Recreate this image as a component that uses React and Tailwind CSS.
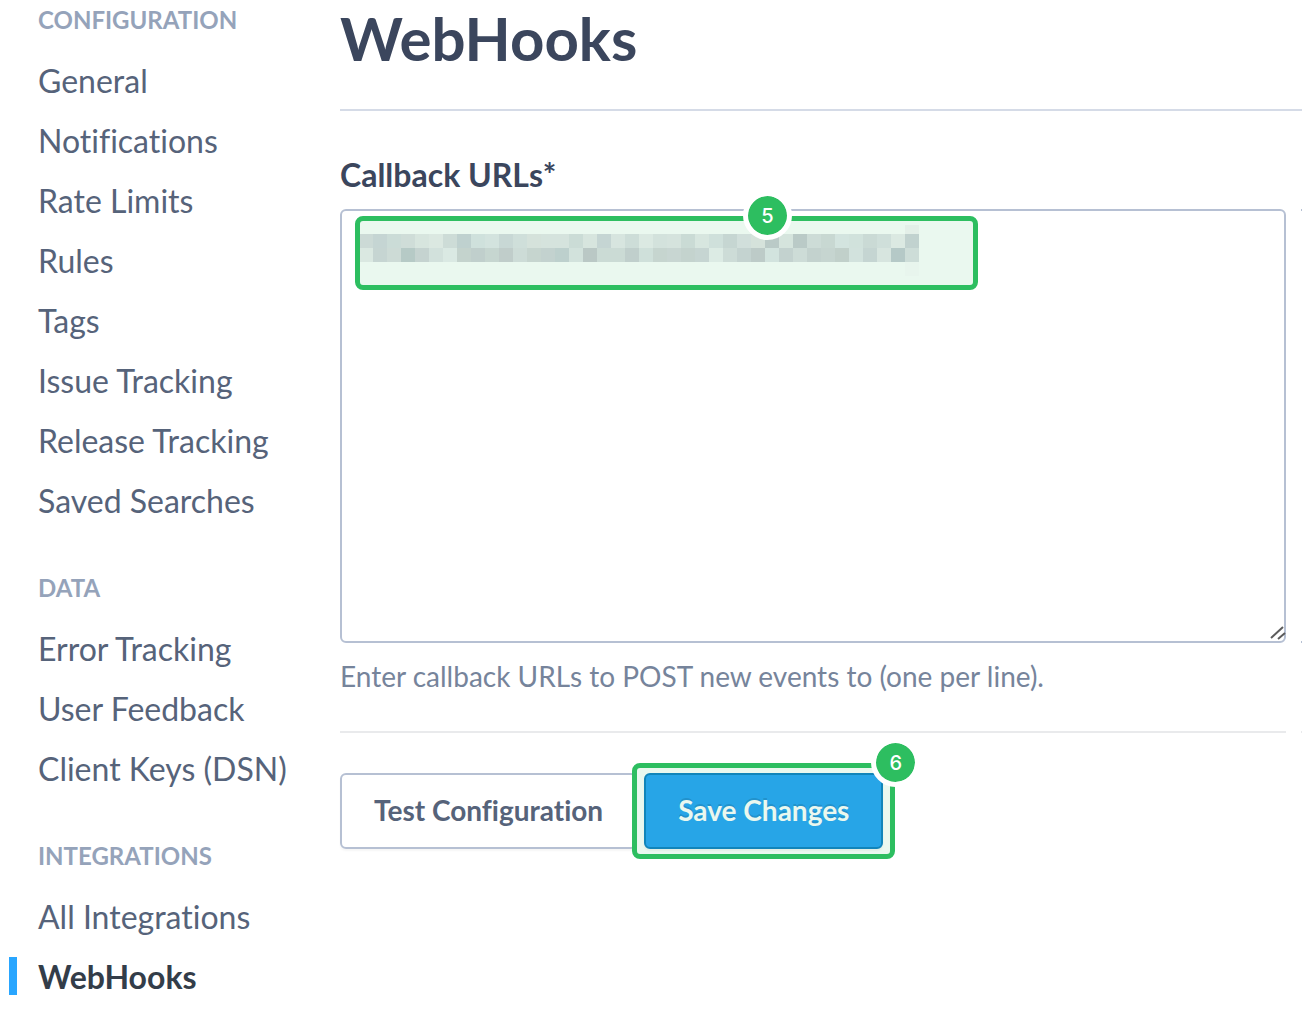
const navigation = [
  {
    title: 'Configuration',
    items: ['General', 'Notifications', 'Rate Limits', 'Rules', 'Tags', 'Issue Tracking', 'Release Tracking', 'Saved Searches'],
  },
  { title: 'Data', items: ['Error Tracking', 'User Feedback', 'Client Keys (DSN)'] },
  { title: 'Integrations', items: ['All Integrations', 'WebHooks'] },
];

const mosaicRows = [
  'ccdad6 c5d5d3 cbdcd7 cfddd8 d7e5de dbe8e1 cddcd7 bfd1cf cfe1dc d3e3de c8d8d5 cfdfda d5e2db d5e3dd d5e3dd cbdcd6 d7e5de c5d5d3 d7e5df cdddd8 dbe9e2 d3e2dc d5e3dd cadbd5 d7e6df cfe0db c6d6d2 d1dfdb d5e2db bacac7 d5e4dd bacac7 cddcd7 c8d8d2 d3e4df d1e2dc cadad5 cfdfda dbe9e2 c1d2cf',
  'dae8e1 c6d5d2 cddbd6 b6cac6 c5d3d0 d2e1dc dae9e3 c4d3cd c0cfcc c6d6d0 c0cdca cddcd7 c6d5cf c3d2cf bdd0cd d2e2dc bac8c5 cbdbd5 cbdbd5 c0cfcc cfe0da c6d5cf c8d6d2 c4d3ce c6d5d2 dcebe4 cddcd7 c4d3d0 bdcbc8 d2e3de c3d2cf cddcd7 c3d2ce c6d5d0 c1d0ca d2e2dd c5d5d2 d7e5df b5c9c7 cdddd8',
].map((row) => row.split(' '));

function Mosaic() {
  return (
    <svg width="559" height="51" viewBox="1 0 559 51" shapeRendering="crispEdges" aria-hidden="true">
      {mosaicRows.map((row, y) =>
        row.map((color, x) => (
          <rect key={`${x}-${y}`} x={x * 14} y={9 + y * 14} width="14" height="14" fill={`#${color}`} />
        )),
      )}
      <rect x="546" y="0" width="14" height="9" fill="#e3efe8" />
      <rect x="546" y="37" width="14" height="14" fill="#e8f5ed" />
    </svg>
  );
}

function Badge({ children, className }) {
  return (
    <span
      className={`absolute flex size-[49px] items-center justify-center rounded-full border-5 border-white bg-[#2dbe60] bg-clip-padding font-[Inter,sans-serif] text-xl leading-none font-medium text-white ${className}`}
    >
      {children}
    </span>
  );
}

function NavGroup({ title, items }) {
  return (
    <section>
      <h2 className="text-2xl leading-8 font-bold text-[#95a3ba] uppercase">{title}</h2>
      <ul className="mt-[15px] mb-px">
        {items.map((item) => {
          const active = item === 'WebHooks';
          return (
            <li key={item} className="relative flex h-[60px] items-center">
              {active && <span className="absolute top-2.5 -left-[29px] h-[38px] w-2 bg-[#29a6ff]" />}
              <a
                href="#"
                aria-current={active ? 'page' : undefined}
                className={active ? 'font-bold text-[#333d49]' : 'text-[#56637a]'}
              >
                {item}
              </a>
            </li>
          );
        })}
      </ul>
    </section>
  );
}

export default function App() {
  return (
    <div className="flex overflow-hidden bg-white font-[Lato,sans-serif] text-[32px] leading-10 text-[#3b4560] [font-variant-ligatures:none]">
      <nav aria-label="Settings" className="flex w-[340px] shrink-0 flex-col gap-10 pt-1 pl-[38px] whitespace-nowrap">
        {navigation.map((group) => (
          <NavGroup key={group.title} {...group} />
        ))}
      </nav>

      <main className="min-w-0 flex-1">
        <h1 className="border-b-2 border-[#d5dbe7] pt-0.5 pb-[35px] text-[60px] leading-[72px] font-bold text-[#3b465d]">
          WebHooks
        </h1>

        <form className="mt-11" onSubmit={(event) => event.preventDefault()}>
          <label htmlFor="callback-urls" className="block font-bold text-[#3b465d]">
            Callback URLs*
          </label>
          <div className="mt-3.5 flex gap-[15px]">
            <div className="relative flex-1">
              <textarea
                id="callback-urls"
                className="block h-[434px] w-full resize-none rounded-md border-2 border-[#b6c0d3] bg-white p-5 outline-none"
              />
              <svg className="absolute right-0 bottom-0 size-[18px]" viewBox="0 0 18 18" stroke="#5c5c5c" strokeWidth="2" aria-hidden="true">
                <path d="M3 13 15 2M10 14 17 8" />
              </svg>
              <div className="absolute top-[7px] left-[15px] h-[74px] w-[623px] rounded-lg border-5 border-[#2dbe60] bg-[#2dbe60]/10 pt-1">
                <Mosaic />
                <Badge className="-top-[30px] left-[383px]">5</Badge>
              </div>
            </div>
            <span className="w-px border-y-2 border-[#b6c0d3]" />
          </div>
          <p className="mt-[13px] text-[28px] text-[#76849b]">
            Enter callback URLs to POST new events to (one per line).
          </p>

          <div className="mt-[35px] flex gap-[15px]">
            <hr className="flex-1 border-t-2 border-[#e9eaec]" />
            <span className="w-px bg-[#e9eaec]" />
          </div>

          <div className="mt-10 flex gap-[7px] text-[28px] font-bold">
            <button
              type="button"
              className="h-[76px] rounded-md border-2 border-[#b6c0d3] px-8 pb-0.5 text-[#56637a] shadow-[0_2px_2px_rgba(0,0,0,0.04)]"
            >
              Test Configuration
            </button>
            <div className="relative">
              <button
                type="submit"
                className="h-[76px] rounded-md border-2 border-[#0e7fc4] bg-[#26a3f7] px-8 pb-0.5 text-white shadow-[0_2px_2px_rgba(0,0,0,0.04)] [text-shadow:0_-2px_0_rgba(0,0,0,0.15)]"
              >
                Save Changes
              </button>
              <div className="pointer-events-none absolute -top-2.5 -right-3 -bottom-2.5 -left-3 rounded-lg border-5 border-[#2dbe60] bg-[#2dbe60]/10">
                <Badge className="-top-[30px] -right-[30px]">6</Badge>
              </div>
            </div>
          </div>
        </form>
      </main>
    </div>
  );
}
